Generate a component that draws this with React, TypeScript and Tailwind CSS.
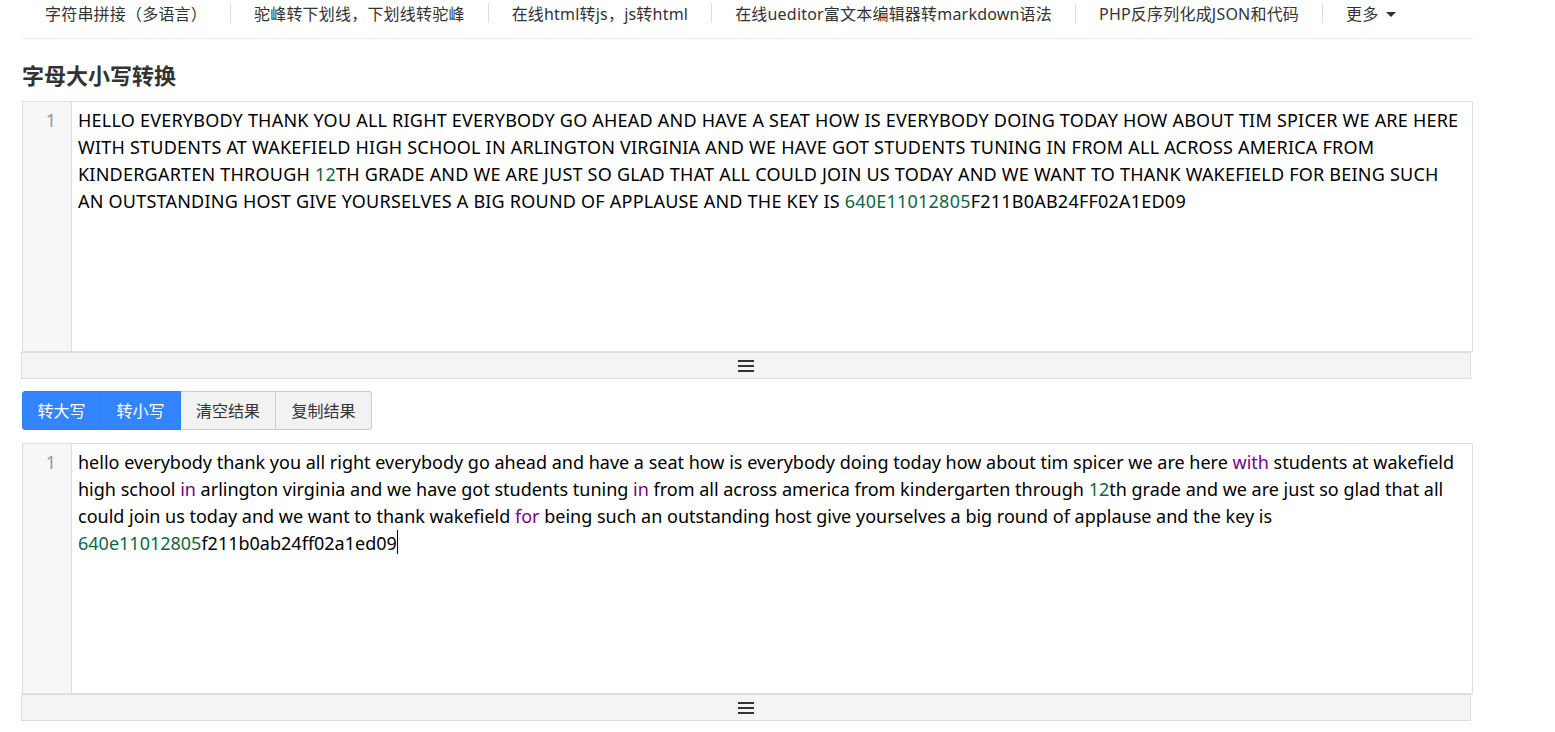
import React from "react";

const navItems = [
  "字符串拼接（多语言）",
  "驼峰转下划线，下划线转驼峰",
  "在线html转js，js转html",
  "在线ueditor富文本编辑器转markdown语法",
  "PHP反序列化成JSON和代码",
];

type Seg = { t: string; c?: "num" | "kw" };

const upperLines: Seg[][] = [
  [{ t: "HELLO EVERYBODY THANK YOU ALL RIGHT EVERYBODY GO AHEAD AND HAVE A SEAT HOW IS EVERYBODY DOING TODAY HOW ABOUT TIM SPICER WE ARE HERE" }],
  [{ t: "WITH STUDENTS AT WAKEFIELD HIGH SCHOOL IN ARLINGTON VIRGINIA AND WE HAVE GOT STUDENTS TUNING IN FROM ALL ACROSS AMERICA FROM" }],
  [
    { t: "KINDERGARTEN THROUGH " },
    { t: "12", c: "num" },
    { t: "TH GRADE AND WE ARE JUST SO GLAD THAT ALL COULD JOIN US TODAY AND WE WANT TO THANK WAKEFIELD FOR BEING SUCH" },
  ],
  [
    { t: "AN OUTSTANDING HOST GIVE YOURSELVES A BIG ROUND OF APPLAUSE AND THE KEY IS " },
    { t: "640E11012805", c: "num" },
    { t: "F211B0AB24FF02A1ED09" },
  ],
];

const lowerLines: Seg[][] = [
  [
    { t: "hello everybody thank you all right everybody go ahead and have a seat how is everybody doing today how about tim spicer we are here " },
    { t: "with", c: "kw" },
    { t: " students at wakefield" },
  ],
  [
    { t: "high school " },
    { t: "in", c: "kw" },
    { t: " arlington virginia and we have got students tuning " },
    { t: "in", c: "kw" },
    { t: " from all across america from kindergarten through " },
    { t: "12", c: "num" },
    { t: "th grade and we are just so glad that all" },
  ],
  [
    { t: "could join us today and we want to thank wakefield " },
    { t: "for", c: "kw" },
    { t: " being such an outstanding host give yourselves a big round of applause and the key is" },
  ],
  [{ t: "640e11012805", c: "num" }, { t: "f211b0ab24ff02a1ed09" }],
];

function Segs({ segs }: { segs: Seg[] }) {
  return (
    <>
      {segs.map((s, i) => (
        <span
          key={i}
          className={
            s.c === "num" ? "text-[#116644]" : s.c === "kw" ? "text-[#770088]" : ""
          }
        >
          {s.t}
        </span>
      ))}
    </>
  );
}

function Editor({ lines, cursor, upper }: { lines: Seg[][]; cursor?: boolean; upper?: boolean }) {
  return (
    <div>
      <div className="flex h-[251px] border border-[#e0e0e0] bg-white">
        <div className="w-[49px] shrink-0 border-r border-[#ddd] bg-[#f7f7f7] pt-[5px] pr-[15px] text-right text-[18px] leading-[27px] text-[#999]">
          1
        </div>
        <div
          className={
            "flex-1 pt-[5px] pl-[6px] text-[18px] leading-[27px] text-black " +
            (upper ? "tracking-[0.22px]" : "")
          }
        >
          {lines.map((l, i) => (
            <div key={i} className="whitespace-pre">
              <Segs segs={l} />
              {cursor && i === lines.length - 1 && (
                <span className="relative">
                  <span className="absolute top-[-1px] left-[0px] h-[24px] w-[1px] bg-black" />
                </span>
              )}
            </div>
          ))}
        </div>
      </div>
      <div className="flex h-[27px] w-[1450px] -translate-x-[1px] items-center justify-center border border-[#ddd] bg-[#f4f4f4]">
        <div className="flex w-[16px] flex-col gap-[3px]">
          <span className="h-[2px] bg-[#333]" />
          <span className="h-[2px] bg-[#333]" />
          <span className="h-[2px] bg-[#333]" />
        </div>
      </div>
    </div>
  );
}

export default function App() {
  return (
    <div
      className="min-h-[732px] bg-white text-[#333]"
      style={{ fontFamily: '"Noto Sans", "Noto Sans CJK SC", sans-serif' }}
    >
      <div className="w-[1473px] pl-[22px]">
        <nav className="flex h-[39px] items-start border-b border-[#eee] pt-[3px] tracking-[0.2px]">
          {navItems.map((n) => (
            <React.Fragment key={n}>
              <div className="px-[23px] text-[16px] leading-[22px] text-[#333]">{n}</div>
              <div className="h-[20px] w-[1px] bg-[#ddd]" />
            </React.Fragment>
          ))}
          <div className="flex items-center gap-[8px] px-[23px] text-[16px] leading-[22px] text-[#333]">
            更多
            <span className="h-0 w-0 border-x-[5px] border-t-[5px] border-x-transparent border-t-[#333]" />
          </div>
        </nav>
        <h1 className="mt-[21px] mb-[11px] text-[22px] leading-[30px] font-bold text-[#333]">
          字母大小写转换
        </h1>
        <Editor lines={upperLines} upper />
        <div className="mt-[12px] mb-[13px] flex h-[39px] text-[16px]">
          <button className="w-[79px] rounded-l-[3px] border border-[#2f7ff0] bg-[#3385ff] text-white">转大写</button>
          <button className="w-[80px] border border-l-0 border-[#2f7ff0] bg-[#3385ff] text-white">转小写</button>
          <button className="w-[95px] border border-l-0 border-[#ccc] bg-[#f2f2f2] text-[#333]">清空结果</button>
          <button className="w-[96px] rounded-r-[3px] border border-l-0 border-[#ccc] bg-[#f2f2f2] text-[#333]">复制结果</button>
        </div>
        <Editor lines={lowerLines} cursor />
      </div>
    </div>
  );
}
